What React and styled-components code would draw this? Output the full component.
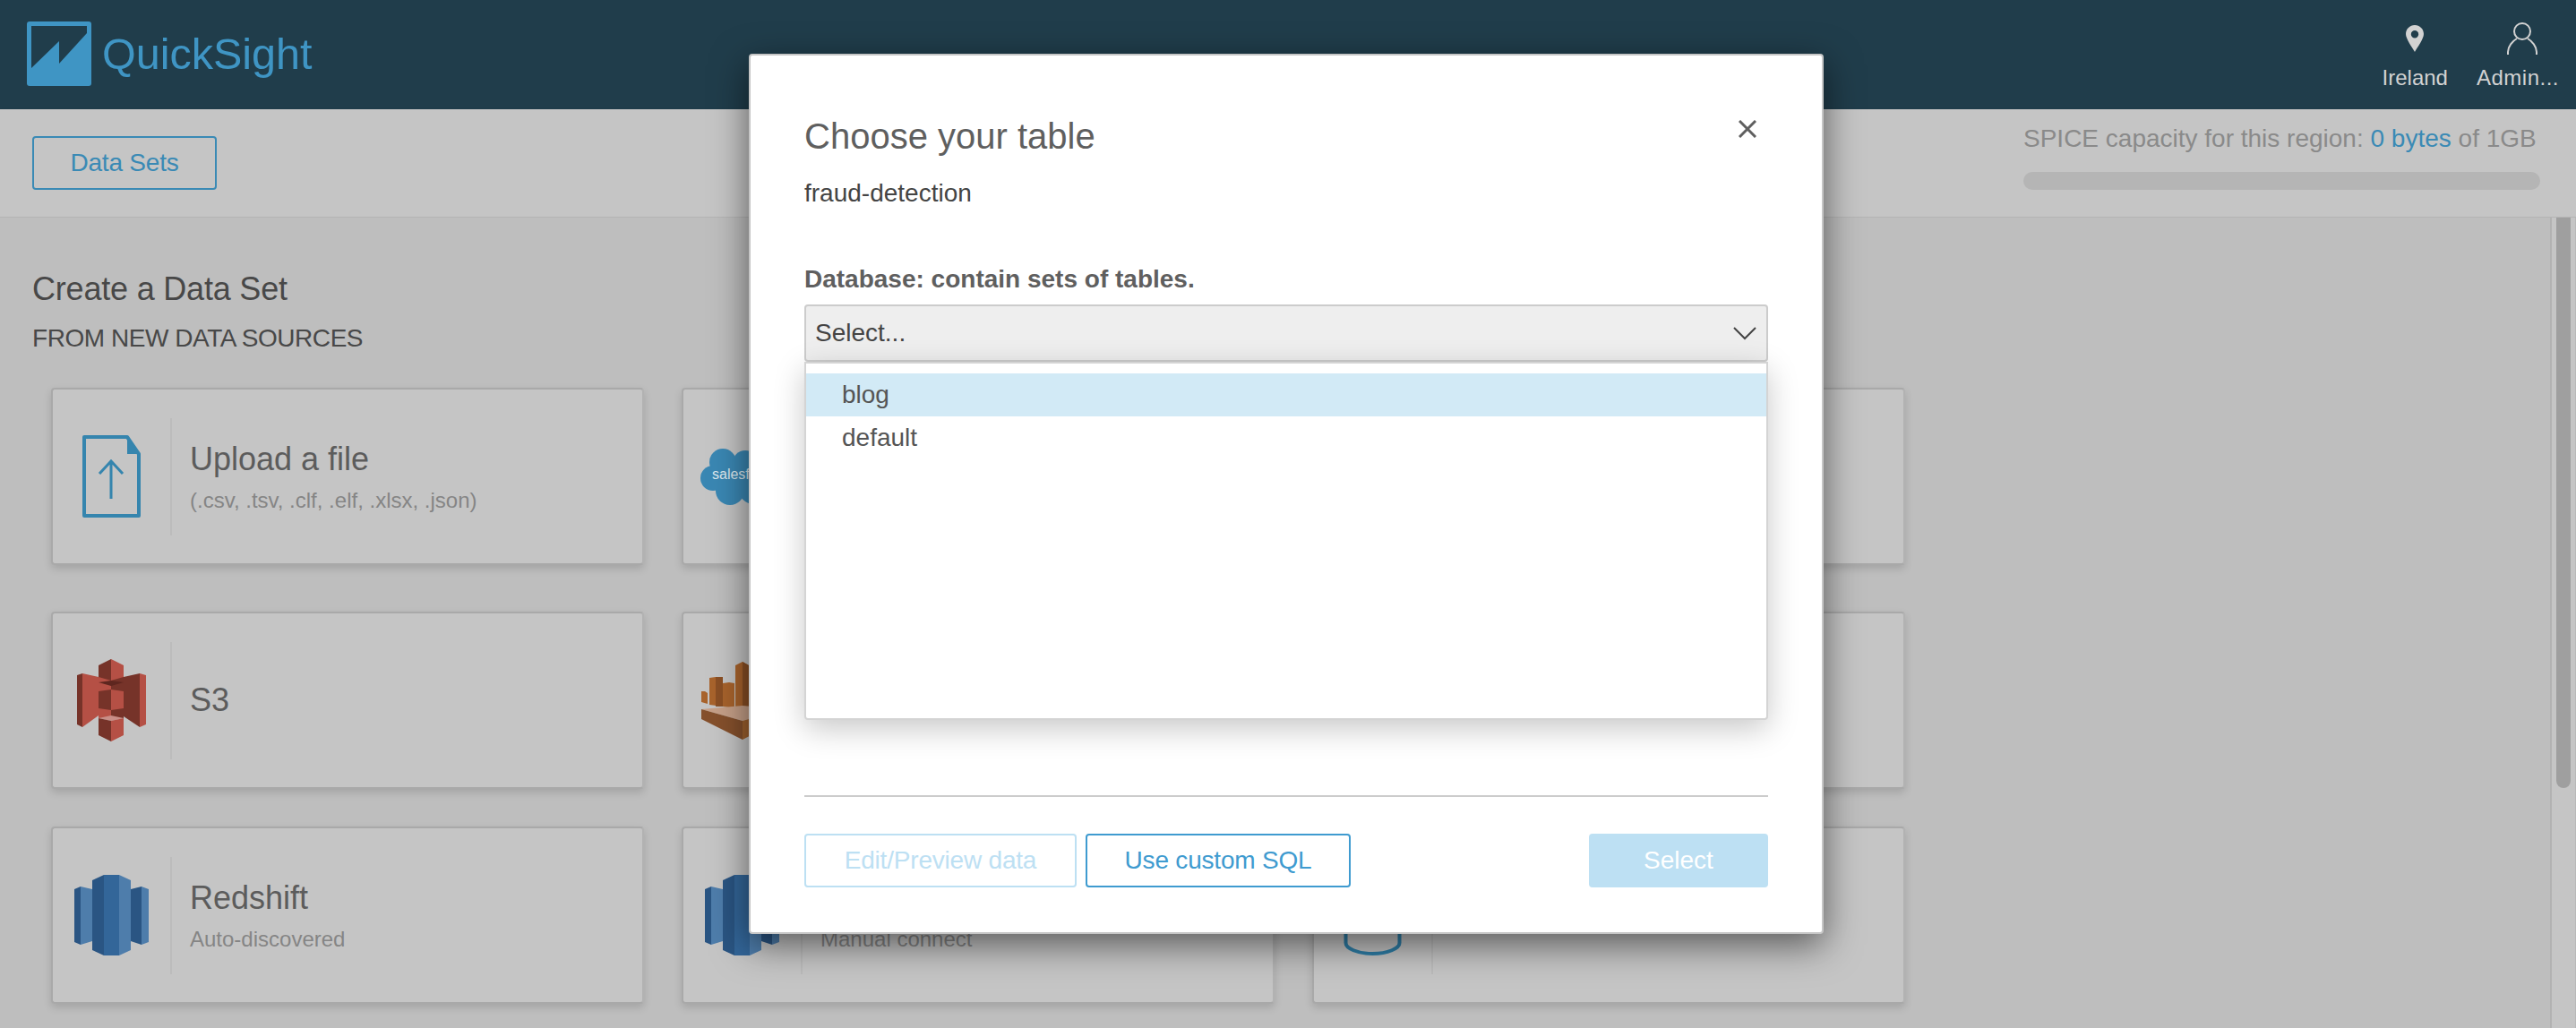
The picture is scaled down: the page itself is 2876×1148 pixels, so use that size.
import React from 'react'
import styled, { createGlobalStyle } from 'styled-components'

const GlobalStyle = createGlobalStyle`
  html, body {
    margin: 0;
    height: 100%;
    overflow: hidden;
    font-family: "Liberation Sans", Arial, sans-serif;
    background: #bebebe;
  }
  * { box-sizing: border-box; }
`

const Page = styled.div`
  position: relative;
  display: flex;
  flex-direction: column;
  width: 2876px;
  height: 1148px;
  overflow: hidden;
`

const Header = styled.header`
  flex: none;
  display: flex;
  align-items: flex-start;
  justify-content: space-between;
  height: 122px;
  padding: 24px 19px 0 30px;
  background: #203d4b;
`

const Brand = styled.div`
  display: flex;
  gap: 12px;
`

const BrandName = styled.span`
  font-size: 48.5px;
  line-height: 72px;
  color: #3f95c4;
`

const HeaderLinks = styled.nav`
  display: flex;
  gap: 32px;
  margin-top: 1px;
`

const HeaderLink = styled.div`
  display: flex;
  flex-direction: column;
  align-items: center;
  color: #d2d2d2;
  font-size: 24px;
  line-height: 28px;
  letter-spacing: ${(p) => p.$spacing || 0}px;
`

const HeaderIconBox = styled.div`
  display: flex;
  align-items: center;
  height: 36px;
  margin: 0 0 12px ${(p) => p.$shift || 0}px;
`

const Toolbar = styled.div`
  flex: none;
  display: flex;
  align-items: flex-start;
  justify-content: space-between;
  height: 121px;
  padding: 30px 40px 0 36px;
  background: #c5c5c5;
  border-bottom: 1px solid #b4b4b4;
  box-shadow: 0 1px 3px rgba(0, 0, 0, 0.08);
`

const OutlineButton = styled.button`
  height: 60px;
  width: ${(p) => p.$width}px;
  padding: 0;
  background: transparent;
  border: 2px solid ${(p) => p.$color};
  border-radius: 4px;
  color: ${(p) => p.$color};
  font: 28px "Liberation Sans", Arial, sans-serif;
  letter-spacing: -0.2px;
`

const Capacity = styled.div`
  width: 577px;
  margin-top: -20px;
  color: #8a8a8a;
  font-size: 28px;
  line-height: 46px;
  white-space: nowrap;
`

const CapacityValue = styled.span`
  color: #3a8ab5;
`

const CapacityBar = styled.div`
  height: 20px;
  margin-top: 14px;
  border-radius: 10px;
  background: #b5b5b5;
`

const Body = styled.div`
  flex: 1;
  display: flex;
  min-height: 0;
`

const Content = styled.main`
  flex: 1;
  padding: 58px 0 0 36px;
  background: #bebebe;
`

const Heading = styled.h1`
  margin: 0;
  color: #484848;
  font-size: 36px;
  font-weight: 400;
  line-height: 44px;
  letter-spacing: -0.2px;
`

const SubHeading = styled.h2`
  margin: 16px 0 38px;
  color: #484848;
  font-size: 28px;
  font-weight: 400;
  line-height: 34px;
  letter-spacing: -0.45px;
`

const CardRow = styled.div`
  display: flex;
  gap: 42px;
  margin: 0 0 ${(p) => p.$after}px 21px;
`

const Card = styled.section`
  display: flex;
  align-items: center;
  width: 662px;
  height: 198px;
  background: #c5c5c5;
  border: 2px solid #a9a9a9;
  border-right-color: #b2b2b2;
  border-radius: 4px;
  box-shadow: 0 4px 10px rgba(0, 0, 0, 0.14);
`

const CardIcon = styled.div`
  flex: none;
  display: flex;
  align-items: center;
  justify-content: center;
  width: 134px;
  height: 131px;
  margin-left: -1px;
  border-right: 2px solid #bcbcbc;
`

const CardText = styled.div`
  padding-left: 20px;
`

const CardTitle = styled.div`
  color: #5c5c5c;
  font-size: 36px;
  line-height: 44px;
`

const CardHint = styled.div`
  margin-top: 9px;
  color: #858585;
  font-size: 24px;
  line-height: 30px;
`

const ScrollTrack = styled.div`
  flex: none;
  width: 29px;
  padding-left: 5px;
  background: #c5c5c5;
  border-left: 2px solid #b2b2b2;
  border-right: 1px solid #b8b8b8;
`

const ScrollThumb = styled.div`
  width: 16px;
  height: 637px;
  background: #9f9f9f;
  border-radius: 0 0 8px 8px;
`

const Modal = styled.div`
  position: absolute;
  left: 836px;
  top: 60px;
  display: flex;
  flex-direction: column;
  width: 1200px;
  height: 983px;
  padding: 0 60px 50px;
  background: #fff;
  border: 2px solid #c6c6c6;
  border-radius: 4px;
  box-shadow: 0 12px 40px rgba(0, 0, 0, 0.55);
`

const ModalHead = styled.div`
  display: flex;
  align-items: flex-start;
  justify-content: space-between;
  padding: 66px 13px 0 0;
`

const ModalTitle = styled.h2`
  margin: 0;
  color: #5f5f5f;
  font-size: 40px;
  font-weight: 400;
  line-height: 48px;
`

const CloseIcon = styled.svg`
  margin-top: 6px;
`

const TableName = styled.div`
  margin-top: 23px;
  color: #444;
  font-size: 28px;
  line-height: 34px;
`

const FieldLabel = styled.label`
  display: block;
  margin: 62px 0 11px;
  color: #5f5f5f;
  font-size: 28px;
  font-weight: 700;
  line-height: 34px;
`

const SelectBox = styled.div`
  position: relative;
`

const SelectTrigger = styled.div`
  display: flex;
  align-items: center;
  justify-content: space-between;
  height: 64px;
  padding: 0 11px 0 10px;
  background: #eee;
  border: 2px solid #ccc;
  border-radius: 4px;
  color: #444;
  font-size: 28px;
`

const Menu = styled.ul`
  position: absolute;
  top: 100%;
  left: 0;
  right: 0;
  height: 400px;
  margin: 0;
  padding: 11px 0 0;
  list-style: none;
  background: #fff;
  border: 2px solid #d4d4d4;
  border-radius: 0 0 4px 4px;
  box-shadow: 0 10px 34px rgba(0, 0, 0, 0.22);
`

const MenuItem = styled.li`
  height: ${(p) => (p.$active ? 48 : 49)}px;
  padding-left: 40px;
  background: ${(p) => (p.$active ? '#d2eaf6' : 'transparent')};
  color: #555;
  font-size: 28px;
  line-height: 48px;
`

const Footer = styled.footer`
  display: flex;
  align-items: center;
  gap: 10px;
  margin-top: auto;
  padding-top: 41px;
  border-top: 2px solid #ccc;
`

const PrimaryButton = styled.button`
  width: 200px;
  height: 60px;
  margin-left: auto;
  padding: 0;
  background: #bde0f3;
  border: 0;
  border-radius: 4px;
  color: #fff;
  font: 28px "Liberation Sans", Arial, sans-serif;
`

const BlockIcon = styled.svg`
  display: block;
  flex: none;
`

const LogoMark = () => (
  <BlockIcon width="72" height="72" viewBox="0 0 72 72">
    <rect width="72" height="72" rx="3" fill="#3f95c4" />
    <path d="M5 5H67V13L36 47V22L5 52Z" fill="#203d4b" />
  </BlockIcon>
)

const PinIcon = () => (
  <BlockIcon width="20" height="30" viewBox="0 0 20 30">
    <path
      fillRule="evenodd"
      fill="#d2d2d2"
      d="M10 0C4.5 0 0 4.4 0 10c0 5.2 6.8 14.6 10 20 3.200-5.400 10-14.800 10-20C20 4.400 15.500 0 10 0zm0 6a4.200 4.200 0 1 1 0 8.400A4.200 4.200 0 0 1 10 6z"
    />
  </BlockIcon>
)

const UserIcon = () => (
  <BlockIcon width="34" height="36" viewBox="0 0 34 36" fill="none" stroke="#d2d2d2" strokeWidth="2">
    <ellipse cx="17" cy="10" rx="9" ry="9" />
    <path d="M1 36v-3c0-6 5-12 10-15M33 36v-3c0-6-5-12-10-15" />
  </BlockIcon>
)

const UploadIcon = () => (
  <BlockIcon width="65" height="92" viewBox="0 0 65 92">
    <path d="M2 2H50L63 21V90H2Z" fill="none" stroke="#3585ae" strokeWidth="4" strokeLinejoin="round" />
    <path d="M50 2L63 21H50Z" fill="#3585ae" />
    <path d="M32 71V29M19 43L32 29L45 43" fill="none" stroke="#3585ae" strokeWidth="3" />
  </BlockIcon>
)

const SalesforceIcon = () => (
  <BlockIcon width="92" height="63" viewBox="0 0 92 63">
    <g fill="#3a87b3">
      <circle cx="25" cy="15" r="15" />
      <circle cx="50" cy="16" r="14" />
      <circle cx="72" cy="26" r="20" />
      <circle cx="14" cy="33" r="14" />
      <circle cx="33" cy="47" r="16" />
      <circle cx="60" cy="44" r="18" />
      <rect x="14" y="15" width="58" height="30" />
    </g>
    <text x="13" y="34" fill="#dce8ee" fontSize="16" fontFamily="Liberation Sans">salesforce</text>
  </BlockIcon>
)

const S3Icon = () => (
  <BlockIcon width="77" height="92" viewBox="0 0 77 92">
    <path d="M24 20H38V66H24Z" fill="#b55045" />
    <path d="M38 20H52V66H38Z" fill="#763329" />
    <path d="M6 16L24 20V63L6 76Z" fill="#b55045" />
    <path d="M0 18L6 16V76L0 73Z" fill="#763329" />
    <path d="M52 20L70 16V76L52 64Z" fill="#763329" />
    <path d="M70 16L77 18V73L70 76Z" fill="#b55045" />
    <path d="M24 7L38 0V24L24 20Z" fill="#763329" />
    <path d="M38 0L52 7V20L38 24Z" fill="#b55045" />
    <path d="M24 26L38 24L52 26L38 30Z" fill="#5e261f" />
    <path d="M24 36L38 34V57L24 55Z" fill="#763329" />
    <path d="M38 34L52 36V55L38 57Z" fill="#b55045" />
    <path d="M24 66L38 63L52 66L38 69Z" fill="#c98e87" />
    <path d="M24 66L38 69V92L24 85Z" fill="#763329" />
    <path d="M38 69L52 66V85L38 92Z" fill="#b55045" />
  </BlockIcon>
)

const KinesisIcon = () => (
  <BlockIcon width="90" height="87" viewBox="0 0 90 87">
    <path d="M0 33H4L7 35V47L0 45Z" fill="#a8632c" />
    <path d="M9 18L16 17L24 18V50L9 48Z" fill="#a8632c" />
    <path d="M16 17H24V50H16Z" fill="#8a4f24" />
    <path d="M24 24L31 23L37 24V52L24 50Z" fill="#a8632c" />
    <path d="M38 4L46 0L53 4V54L38 53Z" fill="#a8632c" />
    <path d="M46 0L53 4V54L46 54Z" fill="#8a4f24" />
    <path d="M0 53L46 49L90 53L46 66Z" fill="#c6a088" />
    <path d="M0 53L46 66V87L0 64Z" fill="#85502c" />
    <path d="M46 66L90 53V64L46 87Z" fill="#a0622f" />
  </BlockIcon>
)

const RedshiftIcon = () => (
  <BlockIcon width="83" height="90" viewBox="0 0 83 90">
    <path d="M0 16L7 13V78L0 75Z" fill="#2a5583" />
    <path d="M7 13L20 16V74L7 78Z" fill="#4e7dab" />
    <path d="M20 6L33 0V90L20 84Z" fill="#2a5583" />
    <path d="M33 0H50V90H33Z" fill="#336699" />
    <path d="M50 0L63 6V84L50 90Z" fill="#4e7dab" />
    <path d="M63 16L75 13V78L63 74Z" fill="#2a5583" />
    <path d="M75 13L83 16V75L75 78Z" fill="#4e7dab" />
  </BlockIcon>
)

const DatabaseIcon = () => (
  <BlockIcon width="65" height="90" viewBox="0 0 65 90" fill="none" stroke="#2f7fa8" strokeWidth="4">
    <ellipse cx="32.500" cy="12" rx="30" ry="10" />
    <path d="M2.500 12V76c0 6 13 12 30 12s30-6 30-12V12" />
  </BlockIcon>
)

const rows = [
  {
    after: 52,
    cards: [
      { icon: <UploadIcon />, title: 'Upload a file', hint: '(.csv, .tsv, .clf, .elf, .xlsx, .json)' },
      { icon: <SalesforceIcon /> },
      {},
    ],
  },
  {
    after: 42,
    cards: [{ icon: <S3Icon />, title: 'S3' }, { icon: <KinesisIcon /> }, {}],
  },
  {
    after: 0,
    cards: [
      { icon: <RedshiftIcon />, title: 'Redshift', hint: 'Auto-discovered' },
      { icon: <RedshiftIcon />, title: 'Redshift', hint: 'Manual connect' },
      { icon: <DatabaseIcon /> },
    ],
  },
]

const App = () => (
  <Page>
    <GlobalStyle />
    <Header>
      <Brand>
        <LogoMark />
        <BrandName>QuickSight</BrandName>
      </Brand>
      <HeaderLinks>
        <HeaderLink>
          <HeaderIconBox>
            <PinIcon />
          </HeaderIconBox>
          Ireland
        </HeaderLink>
        <HeaderLink $spacing={0.5}>
          <HeaderIconBox $shift={10}>
            <UserIcon />
          </HeaderIconBox>
          Admin...
        </HeaderLink>
      </HeaderLinks>
    </Header>
    <Toolbar>
      <OutlineButton $width={206} $color="#3a8ab5">Data Sets</OutlineButton>
      <Capacity>
        SPICE capacity for this region: <CapacityValue>0 bytes</CapacityValue> of 1GB
        <CapacityBar />
      </Capacity>
    </Toolbar>
    <Body>
      <Content>
        <Heading>Create a Data Set</Heading>
        <SubHeading>FROM NEW DATA SOURCES</SubHeading>
        {rows.map((row) => (
          <CardRow key={row.after} $after={row.after}>
            {row.cards.map((card, i) => (
              <Card key={i}>
                <CardIcon>{card.icon}</CardIcon>
                <CardText>
                  {card.title && <CardTitle>{card.title}</CardTitle>}
                  {card.hint && <CardHint>{card.hint}</CardHint>}
                </CardText>
              </Card>
            ))}
          </CardRow>
        ))}
      </Content>
      <ScrollTrack>
        <ScrollThumb />
      </ScrollTrack>
    </Body>
    <Modal>
      <ModalHead>
        <ModalTitle>Choose your table</ModalTitle>
        <CloseIcon width="20" height="20" viewBox="0 0 20 20" stroke="#5f5f5f" strokeWidth="3">
          <path d="M1 1L19 19M19 1L1 19" />
        </CloseIcon>
      </ModalHead>
      <TableName>fraud-detection</TableName>
      <FieldLabel>Database: contain sets of tables.</FieldLabel>
      <SelectBox>
        <SelectTrigger>
          Select...
          <svg width="26" height="15" viewBox="0 0 26 15" fill="none" stroke="#444" strokeWidth="2">
            <path d="M1 1L13 13L25 1" />
          </svg>
        </SelectTrigger>
        <Menu>
          <MenuItem $active>blog</MenuItem>
          <MenuItem>default</MenuItem>
        </Menu>
      </SelectBox>
      <Footer>
        <OutlineButton $width={304} $color="#bde0f3">Edit/Preview data</OutlineButton>
        <OutlineButton $width={296} $color="#3f9bd0">Use custom SQL</OutlineButton>
        <PrimaryButton>Select</PrimaryButton>
      </Footer>
    </Modal>
  </Page>
)

export default App
